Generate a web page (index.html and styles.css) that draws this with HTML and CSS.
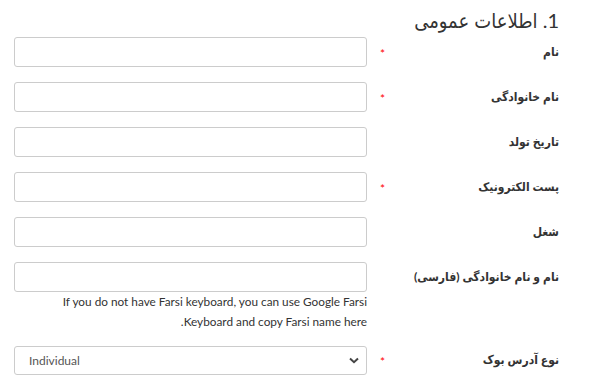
FILE: index.html
```html
<!DOCTYPE html>
<html lang="fa" dir="rtl">
<head>
    <meta charset="UTF-8">
    <title>اطلاعات عمومی</title>
    <link rel="stylesheet" href="styles.css">
</head>
<body>
    <div class="form_box">
        <h2 class="section_title">1. اطلاعات عمومی</h2>

        <div class="row">
            <label class="label">نام</label>
            <span class="star">*</span>
            <input class="field" type="text">
        </div>

        <div class="row">
            <label class="label">نام خانوادگی</label>
            <span class="star">*</span>
            <input class="field" type="text">
        </div>

        <div class="row">
            <label class="label">تاریخ تولد</label>
            <span class="star"></span>
            <input class="field" type="text">
        </div>

        <div class="row">
            <label class="label">پست الکترونیک</label>
            <span class="star">*</span>
            <input class="field" type="text">
        </div>

        <div class="row">
            <label class="label">شغل</label>
            <span class="star"></span>
            <input class="field" type="text">
        </div>

        <div class="row row_help">
            <label class="label">نام و نام خانوادگی (فارسی)</label>
            <span class="star"></span>
            <input class="field" type="text">
            <p class="help">If you do not have Farsi keyboard, you can use Google Farsi Keyboard and copy Farsi name here.</p>
        </div>

        <div class="row">
            <label class="label">نوع آدرس بوک</label>
            <span class="star">*</span>
            <div class="select_wrap">
                <select class="field select">
                    <option>Individual</option>
                    <option>Company</option>
                </select>
                <svg class="chevron" width="10" height="7" viewBox="0 0 10 7"><path d="M1 1.5 L5 5.2 L9 1.5" fill="none" stroke="#444" stroke-width="2"/></svg>
            </div>
        </div>
    </div>
</body>
</html>
```

FILE: styles.css
```css
body {
    margin: 0;
    background: #fff;
    color: #333;
    font-family: Lato, "DejaVu Sans Condensed", sans-serif;
}

.form_box {
    padding: 8px 30px 0 14px;
}

.section_title {
    margin: 0 0 5px 0;
    font-size: 20px;
    font-weight: 400;
    line-height: 24px;
    color: #333;
}

.row {
    display: grid;
    grid-template-columns: 1fr 20px 353px;
    align-items: center;
    margin-bottom: 15px;
}

.row_help {
    margin-bottom: 14px;
}

.label {
    font-size: 12px;
    font-weight: 700;
    color: #333;
    padding-bottom: 2px;
}

.star {
    justify-self: start;
    color: #f00;
    font-size: 12px;
    line-height: 1;
    padding-top: 3px;
    padding-right: 2px;
}

.field {
    box-sizing: border-box;
    height: 30px;
    width: 100%;
    margin: 0;
    border: 1px solid #ccc;
    border-radius: 3px;
    background: #fff;
    font-family: Lato, sans-serif;
    font-size: 12px;
    color: #555;
}

.help {
    grid-column: 3;
    margin: 0;
    font-size: 11.8px;
    line-height: 20px;
    color: #333;
}

.select_wrap {
    position: relative;
    direction: ltr;
    height: 29px;
}

.select {
    height: 29px;
    padding: 0 14px;
    appearance: none;
    -webkit-appearance: none;
    direction: ltr;
}

.chevron {
    position: absolute;
    right: 8px;
    top: 11px;
}
```
